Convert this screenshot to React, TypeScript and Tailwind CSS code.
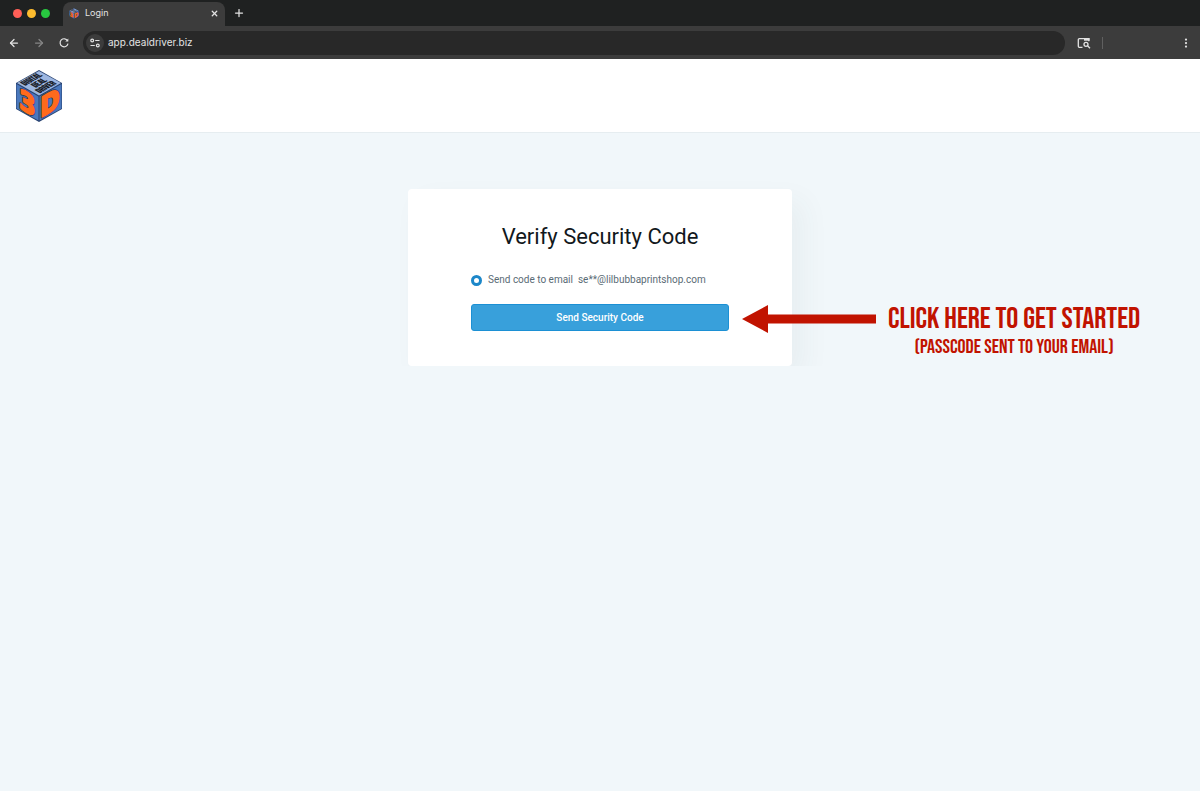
import React, { useState } from 'react';
import { ArrowLeft, ArrowRight, EllipsisVertical, Plus, X } from 'lucide-react';

const Logo: React.FC<{ className?: string }> = ({ className }) => (
  <svg viewBox="0 0 48 54" className={className} aria-label="Digital Deal Driver 3D" role="img">
    <path d="M24 1 47 14v26L24 53 1 40V14z" fill="#26406f" />
    <path d="M24 2 46 14 24 26.500 2 14z" fill="#9db6e0" />
    <path d="M1.500 15 23.500 27.500v24L1.500 39.500z" fill="#4a78bd" />
    <path d="M46.500 15 24.500 27.500v24l22-12z" fill="#4a78bd" />
    <g strokeLinejoin="round">
      <g
        transform="matrix(.87 -.5 .87 .5 2 14)"
        fontFamily="'Bebas Neue', 'Liberation Sans', sans-serif"
        fontSize="9"
        fontWeight="400"
        fill="#10131a"
        stroke="#10131a"
        strokeWidth=".3"
      >
        <text x="2" y="7.500">DIGITAL</text>
        <text x="6" y="15.500">DEAL</text>
        <text x="3" y="23.500">DRIVER</text>
      </g>
      <g fontFamily="'DejaVu Sans', sans-serif" fontWeight="700" fontSize="27">
        <g fill="#22335c" stroke="#22335c" strokeWidth="3.500">
          <text transform="matrix(.87 .5 0 1 2 15)" x="2.500" y="22.500">3</text>
          <text transform="matrix(.87 -.5 0 1 24 27)" x="1.500" y="22.500">D</text>
        </g>
        <g fill="#ff6a1c" stroke="#ff6a1c" strokeWidth="2.200">
          <text transform="matrix(.87 .5 0 1 2 15)" x="2.500" y="22.500">3</text>
          <text transform="matrix(.87 -.5 0 1 24 27)" x="1.500" y="22.500">D</text>
        </g>
      </g>
    </g>
  </svg>
);

const ReloadIcon = () => (
  <svg viewBox="0 0 12 12" className="size-3" fill="none" stroke="currentColor" strokeWidth="1.200">
    <path d="M9.600 3.800A4 4 0 1 0 10 6.700" />
    <path d="M10.300 1.500v3H7.300z" fill="currentColor" stroke="none" />
  </svg>
);

const SiteSettingsIcon = () => (
  <svg viewBox="0 0 12 12" className="size-3" fill="none" stroke="currentColor" strokeWidth="1.200">
    <circle cx="3.200" cy="3.500" r="1.400" />
    <path d="M6.200 3.500H10.500M1.500 8.500h4.300" />
    <circle cx="8.800" cy="8.500" r="1.400" />
  </svg>
);

const TabSearchIcon = () => (
  <svg viewBox="0 0 14 12" className="h-3 w-3.5" fill="none" stroke="currentColor" strokeWidth="1.300">
    <path d="M5.500 10.300H2.300a1 1 0 0 1-1-1V2.700a1 1 0 0 1 1-1h9.500v2.500" />
    <path d="M7 1.200h5.600v2.500H7z" fill="currentColor" stroke="none" />
    <circle cx="9" cy="7.300" r="2" />
    <path d="m10.500 8.800 2.500 2.500" />
  </svg>
);

const BrowserBar = () => (
  <div className="bg-[#1f2121] font-[Inter,sans-serif] text-[#e3e3e3]">
    <div className="flex h-[26px] items-end">
      <div className="flex h-[26px] w-[63px] items-center gap-[5px] pl-[13px]">
        <span className="size-[9px] rounded-full bg-[#ff5f57]" />
        <span className="size-[9px] rounded-full bg-[#febc2e]" />
        <span className="size-[9px] rounded-full bg-[#28c840]" />
      </div>
      <div className="flex h-6 w-[162px] items-center rounded-t-lg bg-[#3c3c3c] px-1.5 pb-0.5">
        <Logo className="h-[11px] w-2.5" />
        <span className="ml-1.5 flex-1 text-[9px]">Login</span>
        <button type="button" aria-label="Close tab">
          <X className="size-[9px]" strokeWidth={3.5} />
        </button>
      </div>
      <button type="button" aria-label="New tab" className="ml-2 flex h-[26px] items-center">
        <Plus className="size-3" strokeWidth={2.5} />
      </button>
    </div>
    <div className="flex h-[33px] items-center bg-[#3c3c3c] pr-2">
      <button type="button" aria-label="Back" className="ml-2">
        <ArrowLeft className="size-3" strokeWidth={2.5} />
      </button>
      <button type="button" aria-label="Forward" className="ml-[13px] text-[#858585]">
        <ArrowRight className="size-3" strokeWidth={2.5} />
      </button>
      <button type="button" aria-label="Reload" className="ml-[13px]">
        <ReloadIcon />
      </button>
      <div className="ml-[13px] flex h-6 flex-1 items-center rounded-full bg-[#282828] pl-[3px]">
        <span className="flex size-[18px] items-center justify-center rounded-full bg-[#3c3c3c]">
          <SiteSettingsIcon />
        </span>
        <input
          aria-label="Address"
          defaultValue="app.dealdriver.biz"
          className="ml-1 min-w-0 flex-1 bg-transparent text-[10px] outline-none"
        />
      </div>
      <button type="button" aria-label="Search tabs" className="ml-3">
        <TabSearchIcon />
      </button>
      <span className="ml-[11px] h-3 w-px bg-[#606060]" />
      <button type="button" aria-label="Menu" className="ml-[77px]">
        <EllipsisVertical className="size-3" strokeWidth={2.5} />
      </button>
    </div>
  </div>
);

const Callout = () => (
  <div className="absolute top-[116px] left-full -ml-[50px] flex items-start gap-3 whitespace-nowrap text-[#c11300]">
    <svg viewBox="0 0 134 28" className="h-7 w-[134px] shrink-0" fill="currentColor" aria-hidden="true">
      <path d="M0 14 26 0v9.500h108v9H26V28z" />
    </svg>
    <div className="text-center font-['Bebas_Neue','Roboto_Condensed','Liberation_Sans_Narrow',sans-serif]">
      <p className="text-[30px] leading-7">CLICK HERE TO GET STARTED</p>
      <p className="text-xl leading-7">(PASSCODE SENT TO YOUR EMAIL)</p>
    </div>
  </div>
);

const VerifyCard = () => {
  const [method, setMethod] = useState('email');

  return (
    <div className="relative mx-auto w-full max-w-sm">
      <form
        onSubmit={(e) => e.preventDefault()}
        className="rounded bg-white px-[63px] pt-8 pb-[35px] shadow-[12px_12px_28px_rgba(60,70,80,0.05)]"
      >
        <h1 className="text-center text-[22px] leading-8 text-[#12181c]">Verify Security Code</h1>
        <label className="mt-[19px] flex items-center text-[10px] leading-4 whitespace-pre text-[#5a6b75]">
          <input
            type="radio"
            name="method"
            value="email"
            checked={method === 'email'}
            onChange={(e) => setMethod(e.target.value)}
            className="mr-1.5 size-[11px] appearance-none rounded-full border border-[#1c87c9] bg-white checked:border-[3px]"
          />
          {'Send code to email  se**@lilbubbaprintshop.com'}
        </label>
        <button
          type="submit"
          className="mt-4 h-[27px] w-full rounded-[3px] border border-[#1c90d4] bg-[#38a0db] text-[10px] font-medium text-white"
        >
          Send Security Code
        </button>
      </form>
      <Callout />
    </div>
  );
};

export default function App() {
  return (
    <div className="flex min-h-screen flex-col bg-[#f1f7fa] font-[Roboto,sans-serif]">
      <BrowserBar />
      <header className="border-b border-[#e6edf0] bg-white px-[15px] pt-2.5 pb-[9px]">
        <a href="#" className="block w-12">
          <Logo className="h-[54px] w-12" />
        </a>
      </header>
      <main className="overflow-hidden pt-14">
        <VerifyCard />
      </main>
    </div>
  );
}
